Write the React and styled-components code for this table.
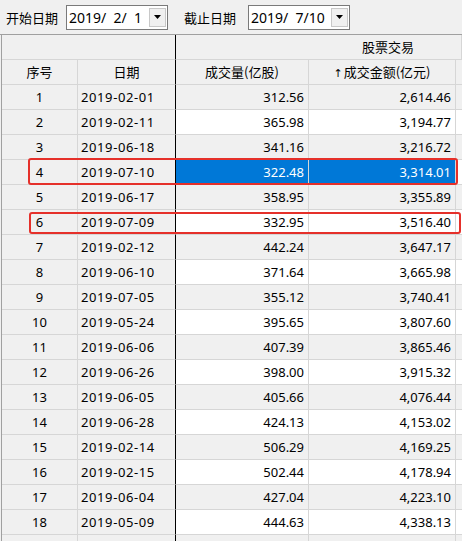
import React from "react";
import styled, { createGlobalStyle } from "styled-components";

const Global = createGlobalStyle`
  html, body { margin: 0; padding: 0; background: #f0f0f0; overflow: hidden; }
  body { font-family: "Noto Sans", "Noto Sans CJK SC", sans-serif; color: #000; }
`;

const Page = styled.div`
  width: 462px;
  height: 541px;
  overflow: hidden;
  background: #f0f0f0;
`;

const Toolbar = styled.div`
  box-sizing: border-box;
  height: 35px;
  display: flex;
  align-items: center;
  padding-left: 6px;
  border-bottom: 1px solid #a0a0a0;
`;

const Label = styled.span`
  font-family: "Noto Sans CJK SC", sans-serif;
  font-size: 13px;
  margin-right: ${(p) => p.$gap}px;
  margin-left: ${(p) => p.$left || 0}px;
`;

const Picker = styled.div`
  box-sizing: border-box;
  width: 102px;
  height: 25px;
  display: flex;
  align-items: center;
  background: #fff;
  border: 1px solid #7a7a7a;
  padding: 2px 1px 2px 2px;
`;

const PickerText = styled.span`
  flex: 1;
  font-family: "Noto Sans", sans-serif;
  font-size: 14px;
  white-space: pre;
  line-height: 19px;
`;

const DropButton = styled.div`
  box-sizing: border-box;
  width: 17px;
  height: 19px;
  background: #f0f0f0;
  border: 1px solid #c8c8c8;
  display: flex;
  align-items: center;
  justify-content: center;
`;

const Grid = styled.div`
  margin-left: 1px;
  border-left: 1px solid #a0a0a0;
`;

const Row = styled.div`
  position: relative;
  display: grid;
  grid-template-columns: 76px 98px 133px 147px 1fr;
  height: 25px;
`;

const Cell = styled.div`
  box-sizing: border-box;
  height: 25px;
  border-right: 1px solid ${(p) => (p.$strong ? "#000" : "#d6d6d6")};
  border-bottom: 1px solid #d6d6d6;
  background: ${(p) => p.$bg};
  color: ${(p) => p.$color || "#000"};
  font-family: ${(p) =>
    p.$cjk ? '"Noto Sans CJK SC", sans-serif' : '"Noto Sans", "Noto Sans CJK SC", sans-serif'};
  font-size: 13px;
  line-height: 24px;
  white-space: nowrap;
  overflow: hidden;
  text-align: ${(p) => p.$align || "left"};
  padding: 0 ${(p) => (p.$align === "right" ? 4 : 3)}px;
  letter-spacing: ${(p) => p.$spacing || 0}px;
  grid-column: ${(p) => p.$span || "auto"};
`;

const GroupCell = styled(Cell)`
  padding-left: 142px;
  text-align: center;
`;

const SortArrow = styled.span`
  font-family: "DejaVu Sans", sans-serif;
  font-size: 11px;
  margin-right: 1px;
`;

const Highlight = styled.div`
  position: absolute;
  left: ${(p) => p.$left}px;
  top: ${(p) => p.$top}px;
  width: ${(p) => p.$w}px;
  height: ${(p) => p.$h}px;
  border: 2px solid #e5302a;
  border-radius: 3px;
  box-sizing: border-box;
  pointer-events: none;
`;

const data = [
  ["1", "2019-02-01", "312.56", "2,614.46"],
  ["2", "2019-02-11", "365.98", "3,194.77"],
  ["3", "2019-06-18", "341.16", "3,216.72"],
  ["4", "2019-07-10", "322.48", "3,314.01"],
  ["5", "2019-06-17", "358.95", "3,355.89"],
  ["6", "2019-07-09", "332.95", "3,516.40"],
  ["7", "2019-02-12", "442.24", "3,647.17"],
  ["8", "2019-06-10", "371.64", "3,665.98"],
  ["9", "2019-07-05", "355.12", "3,740.41"],
  ["10", "2019-05-24", "395.65", "3,807.60"],
  ["11", "2019-06-06", "407.39", "3,865.46"],
  ["12", "2019-06-26", "398.00", "3,915.32"],
  ["13", "2019-06-05", "405.66", "4,076.44"],
  ["14", "2019-06-28", "424.13", "4,153.02"],
  ["15", "2019-02-14", "506.29", "4,169.25"],
  ["16", "2019-02-15", "502.44", "4,178.94"],
  ["17", "2019-06-04", "427.04", "4,223.10"],
  ["18", "2019-05-09", "444.63", "4,338.13"],
  ["", "", "", ""],
];

const marks = {
  3: { left: 26, top: -2, w: 430, h: 27 },
  5: { left: 27, top: 2, w: 432, h: 22 },
};

function Arrow() {
  return (
    <svg width="7" height="4" viewBox="0 0 7 4">
      <path d="M0 0 H7 L3.5 4 Z" fill="#000" />
    </svg>
  );
}

export default function App() {
  return (
    <Page>
      <Global />
      <Toolbar>
        <Label $gap={8}>开始日期</Label>
        <Picker>
          <PickerText>2019/  2/  1</PickerText>
          <DropButton>
            <Arrow />
          </DropButton>
        </Picker>
        <Label $left={16} $gap={12}>截止日期</Label>
        <Picker>
          <PickerText>2019/  7/10</PickerText>
          <DropButton>
            <Arrow />
          </DropButton>
        </Picker>
      </Toolbar>
      <Grid>
        <Row>
          <Cell $span="1 / 3" $strong $bg="#f0f0f0" />
          <GroupCell $span="3 / 6" $cjk $bg="#f0f0f0">股票交易</GroupCell>
        </Row>
        <Row>
          <Cell $cjk $align="center" $bg="#f0f0f0">序号</Cell>
          <Cell $cjk $align="center" $strong $bg="#f0f0f0">日期</Cell>
          <Cell $cjk $align="center" $bg="#f0f0f0">成交量(亿股)</Cell>
          <Cell $cjk $align="center" $bg="#f0f0f0">
            <SortArrow>↑</SortArrow>成交金额(亿元)
          </Cell>
          <Cell $bg="#f0f0f0" />
        </Row>
        {data.map((r, i) => {
          const selected = i === 3;
          const odd = i % 2 === 0;
          const bg = selected ? "#0078d7" : odd ? "#f0f0f0" : "#ffffff";
          const color = selected ? "#fff" : "#000";
          const m = marks[i];
          return (
            <Row key={i}>
              <Cell $align="center" $bg="#f0f0f0">{r[0]}</Cell>
              <Cell $strong $bg="#f0f0f0" $spacing={0.6}>{r[1]}</Cell>
              <Cell $align="right" $bg={bg} $color={color}>{r[2]}</Cell>
              <Cell $align="right" $bg={bg} $color={color}>{r[3]}</Cell>
              <Cell $bg={odd ? "#f0f0f0" : "#ffffff"} />
              {m && <Highlight $left={m.left} $top={m.top} $w={m.w} $h={m.h} />}
            </Row>
          );
        })}
      </Grid>
    </Page>
  );
}
